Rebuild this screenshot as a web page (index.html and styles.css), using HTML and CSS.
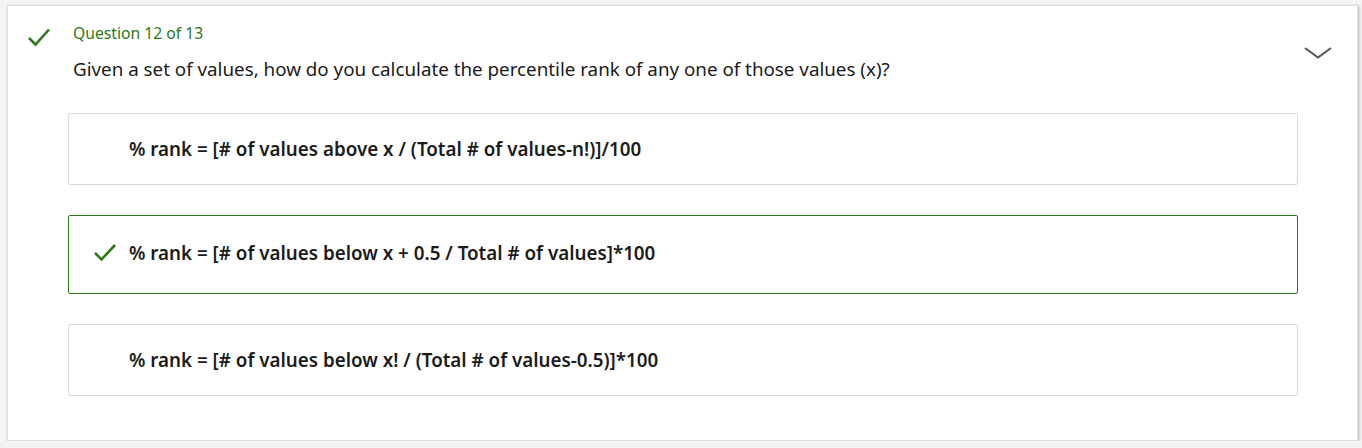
FILE: index.html
```html
<!DOCTYPE html>
<html>
<head>
<meta charset="utf-8">
<link rel="stylesheet" href="styles.css">
</head>
<body>
<div class="card">
  <div class="head">
    <svg class="head-check" width="24" height="21" viewBox="0 0 24 21"><path d="M2 11 L8.5 17.5 L22 2.5" fill="none" stroke="#2b7a19" stroke-width="2.6"/></svg>
    <div class="head-text">
      <div class="qnum">Question 12 of 13</div>
      <div class="qtext">Given a set of values, how do you calculate the percentile rank of any one of those values (x)?</div>
    </div>
    <svg class="chevron" width="28" height="12" viewBox="0 0 28 12"><path d="M1 1 L14 10.5 L27 1" fill="none" stroke="#555" stroke-width="2"/></svg>
  </div>
  <div class="options">
    <div class="option">
      <span class="mark"></span>
      <span class="otext">% rank = [# of values above x / (Total # of values-n!)]/100</span>
    </div>
    <div class="option correct">
      <span class="mark"><svg width="24" height="19" viewBox="0 0 24 19"><path d="M2 10 L8.5 16.5 L22 2" fill="none" stroke="#2b7a19" stroke-width="2.6"/></svg></span>
      <span class="otext">% rank = [# of values below x + 0.5 / Total # of values]*100</span>
    </div>
    <div class="option">
      <span class="mark"></span>
      <span class="otext">% rank = [# of values below x! / (Total # of values-0.5)]*100</span>
    </div>
  </div>
</div>
</body>
</html>
```
FILE: styles.css
```css
html, body {
  margin: 0;
  padding: 0;
}
body {
  background: #f2f4f6;
  font-family: "Noto Sans", "Open Sans", sans-serif;
  color: #1b1b1b;
  padding: 5px 4px 0 7px;
}
.card {
  background: #fff;
  width: 1351px;
  height: 436px;
  box-sizing: border-box;
  box-shadow: 1px 1px 3px rgba(0,0,0,0.25);
  border: 1px solid #dcdcdc;
  padding: 0;
}
.head {
  display: flex;
  align-items: flex-start;
}
.head-check {
  margin: 21px 0 0 19px;
}
.head-text {
  margin-left: 22px;
  margin-top: 17px;
  flex: 1;
}
.qnum {
  color: #2b7a19;
  font-size: 15.7px;
  line-height: 20px;
}
.qtext {
  font-size: 18.8px;
  line-height: 26px;
  margin-top: 13px;
}
.chevron {
  margin: 41px 25px 0 0;
}
.options {
  margin: 31px 0 0 60px;
  width: 1230px;
  display: flex;
  flex-direction: column;
  gap: 30px;
}
.option {
  display: flex;
  align-items: center;
  height: 72px;
  box-sizing: border-box;
  border: 1px solid #dadada;
  border-radius: 2px;
  padding-left: 24px;
}
.option.correct {
  height: 79px;
  border-color: #2b7a19;
  padding-bottom: 4px;
}
.mark {
  width: 36px;
  display: flex;
  align-items: center;
}
.otext {
  font-size: 18.8px;
  font-weight: 600;
}
```
